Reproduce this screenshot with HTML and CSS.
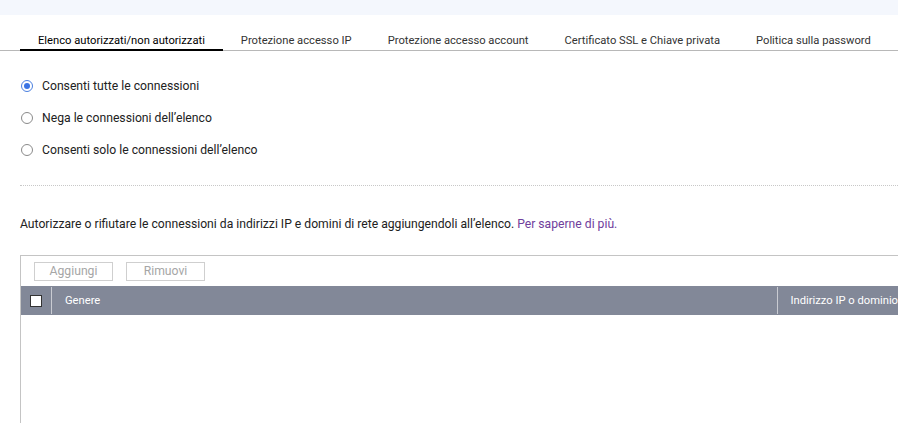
FILE: index.html
```html
<!DOCTYPE html>
<html>
<head>
<meta charset="utf-8">
<link rel="stylesheet" href="styles.css">
</head>
<body>
<div class="topband"></div>
<nav class="tabs">
  <div class="tab active">Elenco autorizzati/non autorizzati</div>
  <div class="tab">Protezione accesso IP</div>
  <div class="tab">Protezione accesso account</div>
  <div class="tab">Certificato SSL e Chiave privata</div>
  <div class="tab">Politica sulla password</div>
</nav>
<main class="content">
  <div class="radios">
    <label class="radio"><span class="dot checked"></span>Consenti tutte le connessioni</label>
    <label class="radio"><span class="dot"></span>Nega le connessioni dell’elenco</label>
    <label class="radio"><span class="dot"></span>Consenti solo le connessioni dell’elenco</label>
  </div>
  <hr class="sep">
  <p class="desc">Autorizzare o rifiutare le connessioni da indirizzi IP e domini di rete aggiungendoli all’elenco. <a class="link">Per saperne di più.</a></p>
  <section class="panel">
    <div class="toolbar">
      <button class="btn">Aggiungi</button>
      <button class="btn">Rimuovi</button>
    </div>
    <div class="thead">
      <div class="cell check"><span class="box"></span></div>
      <div class="cell genre">Genere</div>
      <div class="cell addr">Indirizzo IP o dominio</div>
    </div>
  </section>
</main>
</body>
</html>
```
FILE: styles.css
```css
* { box-sizing: border-box; }
html, body { margin: 0; padding: 0; background: #fff; overflow: hidden; }
body { font-family: Roboto, "Noto Sans", sans-serif; color: #222; width: 898px; height: 423px; }
.topband { height: 15px; background: #f4f7fd; }
.tabs { display: flex; margin-top: 18px; padding-left: 20px; border-bottom: 1px solid #b8b8b8; height: 18px; }
.tab { font-size: 11.2px; padding: 0 18px; line-height: 16px; color: #333; white-space: nowrap; }
.tab.active { color: #000; border-bottom: 2px solid #000; margin-bottom: -1px; }
.content { padding-left: 20px; }
.radios { display: flex; flex-direction: column; gap: 14px; padding-top: 26px; }
.radio { display: flex; align-items: center; font-size: 12.2px; line-height: 18px; color: #222; }
.dot { width: 12px; height: 12px; border: 1px solid #8a8a8a; border-radius: 50%; margin-right: 9px; margin-left: 1px; position: relative; background: #fff; }
.dot.checked { border-color: #4a7fe0; }
.dot.checked::after { content: ""; position: absolute; left: 2px; top: 2px; width: 6px; height: 6px; border-radius: 50%; background: #3b74e4; }
.sep { border: 0; border-top: 1px dotted #c8c8c8; margin: 26px 0 0; }
.desc { margin: 29px 0 0; font-size: 12.16px; line-height: 18px; color: #222; }
.link { color: #70409c; }
.panel { margin-top: 22px; border-top: 1px solid #c4c4c4; border-left: 1px solid #c4c4c4; height: 168px; }
.toolbar { display: flex; gap: 13px; padding: 6px 0 0 13px; height: 30px; }
.btn { width: 79px; height: 19px; border: 1px solid #cfcfcf; background: #fff; color: #a6a6a6; font-family: Roboto, sans-serif; font-size: 12.2px; padding: 0; line-height: 17px; }
.thead { display: flex; height: 29px; background: #828898; color: #fff; font-size: 11.2px; align-items: stretch; }
.cell { display: flex; align-items: center; }
.check { width: 31px; justify-content: center; border-right: 1px solid #c9cbd2; margin: 1px 0; }
.box { width: 12px; height: 12px; background: #fff; border: 1px solid #333; }
.genre { width: 726px; padding-left: 13px; border-right: 1px solid #c9cbd2; margin: 1px 0; }
.addr { padding-left: 13px; white-space: nowrap; }
```
